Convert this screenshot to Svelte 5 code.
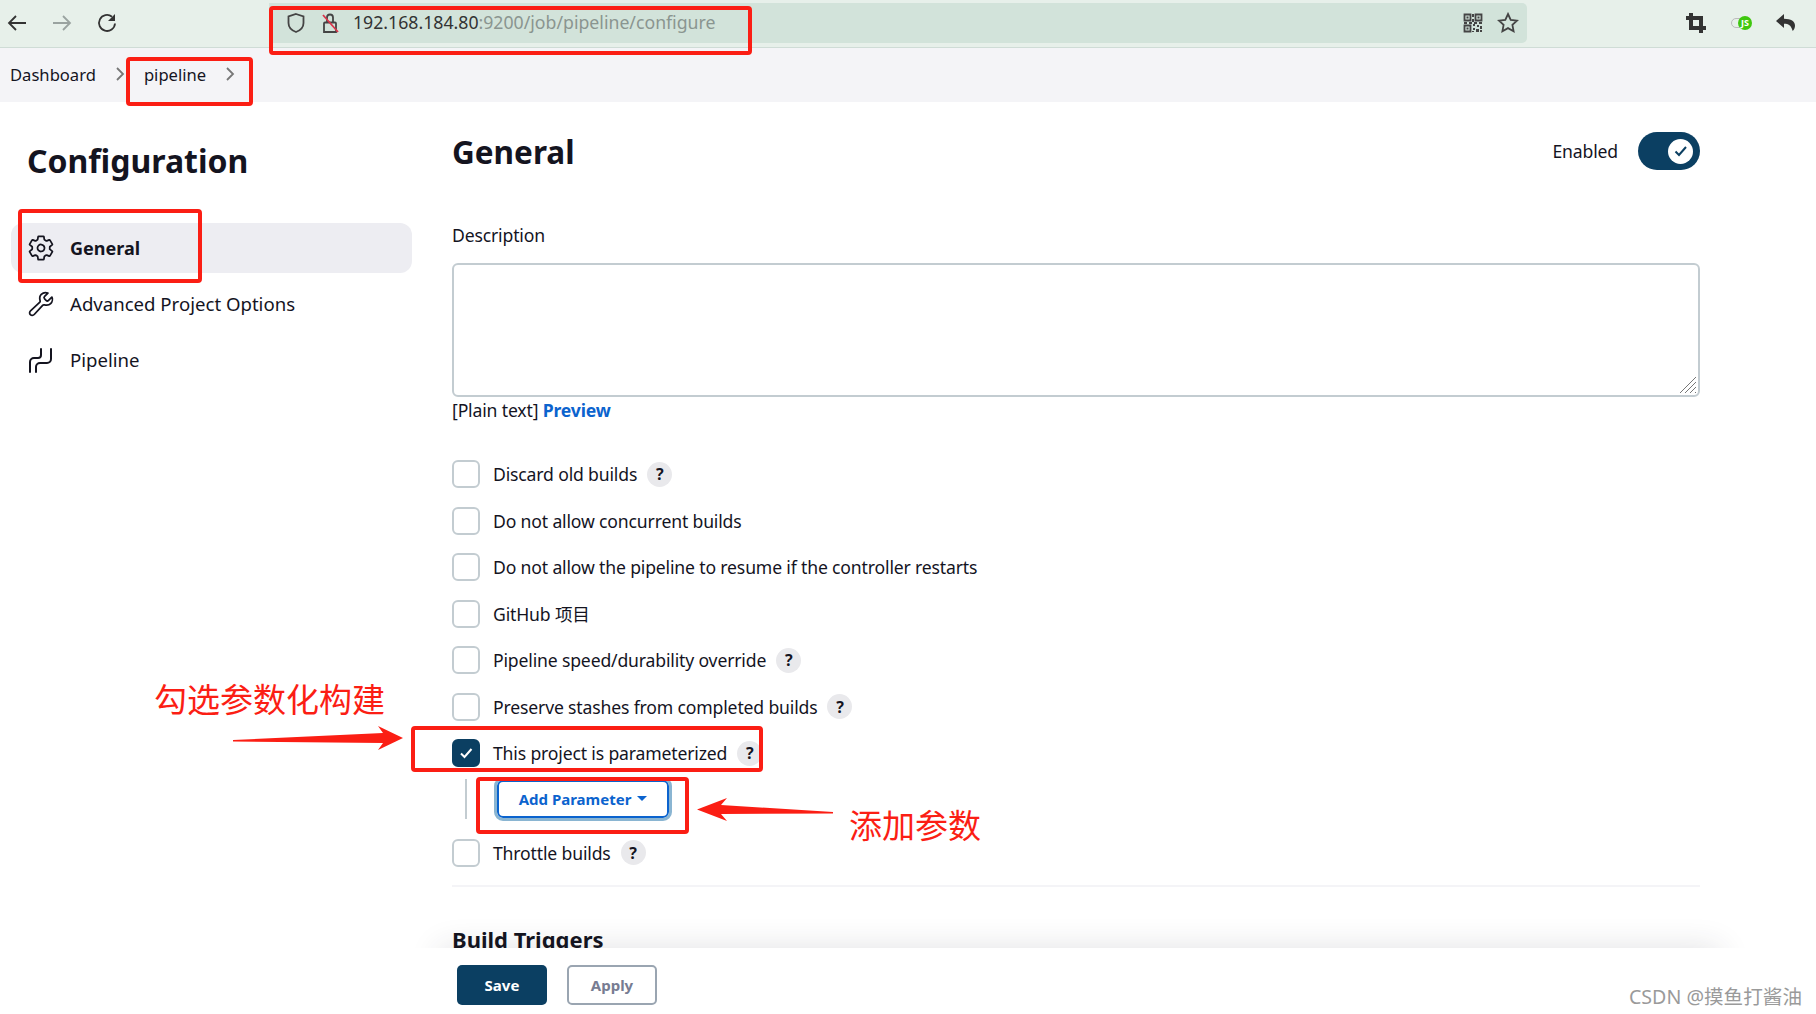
<script>
	const options = [
		{ label: 'Discard old builds', help: true },
		{ label: 'Do not allow concurrent builds' },
		{ label: 'Do not allow the pipeline to resume if the controller restarts' },
		{ label: 'GitHub 项目' },
		{ label: 'Pipeline speed/durability override', help: true },
		{ label: 'Preserve stashes from completed builds', help: true },
		{ label: 'This project is parameterized', help: true, checked: true, param: true },
		{ label: 'Throttle builds', help: true }
	]
</script>

<div class="page">
	<header class="browser">
		<div class="nav">
			<svg width="22" height="22" viewBox="0 0 22 22"><path d="M20 11H3M10 4l-7 7 7 7" /></svg>
			<svg class="off" width="22" height="22" viewBox="0 0 22 22"><path d="M2 11h17M12 4l7 7-7 7" /></svg>
			<svg width="22" height="22" viewBox="0 0 22 22">
				<path d="M19 11.500a8 8 0 1 1-3-6.800" />
				<path class="solid" d="M19 2v7h-7z" />
			</svg>
		</div>
		<div class="address">
			<svg width="20" height="22" viewBox="0 0 20 22"><path d="M10 2l7.500 2.500V11c0 4.500-3.500 7.500-7.500 9-4-1.500-7.500-4.500-7.500-9V4.500z" /></svg>
			<svg class="lock" width="20" height="22" viewBox="0 0 20 22">
				<path d="M5 10.500h10a1 1 0 0 1 1 1V20H4v-8.500a1 1 0 0 1 1-1zM7 10.500V5.500a3 3 0 0 1 6 0v5" />
				<path class="slash" d="M3 3l15 17" />
			</svg>
			<span class="url">192.168.184.80<span class="dim">:9200/job/pipeline/configure</span></span>
			<span class="grow"></span>
			<svg class="qr" width="20" height="20" viewBox="0 0 20 20">
				<path d="M1.500 1.500h6v6h-6zM12.500 1.500h6v6h-6zM1.500 12.500h6v6h-6z" />
				<path class="fill" d="M3.500 3.500h2v2h-2zM14.500 3.500h2v2h-2zM3.500 14.500h2v2h-2zM9 1h2v3H9zM9 6h2v3H9zM1 9h3v2H1zM6 9h3v2H6zM11 9h3v2h-3zM16 9h3v2h-3zM10 11h2v2h-2zM14 12h2v2h-2zM10 15h2v2h-2zM13 16h3v3h-3zM17 13h2v3h-2zM17 17h2v2h-2zM9 18h2v1H9z" />
			</svg>
			<svg width="22" height="22" viewBox="0 0 22 22"><path d="M11 2l2.700 5.800 6.300.8-4.600 4.300 1.200 6.300-5.600-3.100-5.600 3.100 1.200-6.300L2 8.600l6.300-.8z" /></svg>
		</div>
		<div class="tools">
			<svg width="20" height="20" viewBox="0 0 20 20"><path class="thick" d="M5 0v15h15M0 5h15v15" /></svg>
			<span class="js">
				<span class="js-track"></span>
				<span class="js-dot">JS</span>
			</span>
			<svg width="20" height="20" viewBox="0 0 20 20"><path class="solid" d="M8 1L0 8l8 7v-4.300c4.500 0 7 1.300 8.700 7.300 1.300-1 2.300-3 2.300-5.200 0-4.800-4-6.800-11-7z" /></svg>
		</div>
	</header>

	<nav class="crumbs">
		<span>Dashboard</span>
		<svg width="10" height="16" viewBox="0 0 10 16"><path d="M2 2l6 6-6 6" /></svg>
		<span class="crumb-job">pipeline</span>
		<svg width="10" height="16" viewBox="0 0 10 16"><path d="M2 2l6 6-6 6" /></svg>
	</nav>

	<div class="body">
		<aside class="side">
			<h1>Configuration</h1>
			<a class="item active">
				<svg width="28" height="28" viewBox="0 0 512 512"><path class="ion" d="M262.290 192.310a64 64 0 1057.400 57.400 64.130 64.130 0 00-57.400-57.400zM416.390 256a154.340 154.340 0 01-1.530 20.790l45.210 35.460a10.810 10.810 0 012.450 13.750l-42.770 74a10.810 10.810 0 01-13.140 4.590l-44.900-18.080a16.110 16.110 0 00-15.170 1.750A164.480 164.480 0 01325 400.800a15.940 15.940 0 00-8.820 12.140l-6.730 47.890a11.080 11.080 0 01-10.680 9.170h-85.540a11.110 11.110 0 01-10.690-8.870l-6.720-47.820a16.070 16.070 0 00-9-12.220 155.300 155.300 0 01-21.460-12.570 16 16 0 00-15.110-1.710l-44.890 18.070a10.810 10.810 0 01-13.140-4.580l-42.770-74a10.800 10.800 0 012.450-13.750l38.210-30a16.050 16.050 0 006-14.080c-.36-4.170-.58-8.330-.58-12.500s.21-8.270.58-12.350a16 16 0 00-6.070-13.940l-38.190-30A10.810 10.810 0 0149.480 186l42.770-74a10.810 10.810 0 0113.140-4.590l44.900 18.080a16.110 16.110 0 0015.170-1.750A164.480 164.480 0 01187 111.200a15.940 15.940 0 008.820-12.140l6.730-47.890A11.080 11.080 0 01213.230 42h85.540a11.110 11.110 0 0110.690 8.870l6.720 47.820a16.070 16.070 0 009 12.220 155.300 155.300 0 0121.460 12.570 16 16 0 0015.110 1.710l44.890-18.070a10.810 10.810 0 0113.140 4.580l42.770 74a10.800 10.800 0 01-2.450 13.750l-38.210 30a16.050 16.050 0 00-6.050 14.080c.33 4.140.55 8.300.55 12.470z" /></svg>
				<span>General</span>
			</a>
			<a class="item">
				<svg width="28" height="28" viewBox="0 0 512 512"><path class="ion" d="M393.870 190a32.100 32.100 0 01-45.250 0l-26.570-26.570a32.090 32.090 0 010-45.260L382.190 58a1 1 0 00-.3-1.640c-38.820-16.640-89.150-8.160-121.110 23.570-30.580 30.350-32.320 76-21.120 115.840a31.930 31.930 0 01-9.060 32.080L64 380a48.170 48.170 0 1068 68l153.860-167a31.930 31.930 0 0131.600-9.130c39.540 10.590 84.540 8.600 114.720-21.190 32.490-32 39.500-88.560 23.750-120.930a1 1 0 00-1.600-.26z" /></svg>
				<span>Advanced Project Options</span>
			</a>
			<a class="item">
				<svg width="28" height="28" viewBox="0 0 28 28"><path class="pipe" d="M3 27V17a4 4 0 0 1 4-4h4a3 3 0 0 0 3-3V4M9 27v-5a4 4 0 0 1 4-4h7a4 4 0 0 0 4-4V4" /></svg>
				<span>Pipeline</span>
			</a>
		</aside>

		<main class="main">
			<div class="head">
				<h2>General</h2>
				<span class="enabled">Enabled</span>
				<span class="toggle">
					<span class="knob">
						<svg width="16" height="16" viewBox="0 0 16 16"><path d="M2.500 8.500l3.500 3.500 7-8" /></svg>
					</span>
				</span>
			</div>

			<div class="desc-label">Description</div>
			<div class="textarea">
				<svg class="grip" width="18" height="18" viewBox="0 0 18 18"><path d="M1 17L17 1M6 17L17 6M11 17l6-6M16 17l1-1" /></svg>
			</div>
			<div class="plain">[Plain text] <a>Preview</a></div>

			<div class="options">
				{#each options as o}
					<div class="option">
						<span class="box" class:checked={o.checked}>
							{#if o.checked}
								<svg width="18" height="18" viewBox="0 0 18 18"><path d="M4 9.500l3.500 3.500 7-8" /></svg>
							{/if}
						</span>
						<span>{o.label}</span>
						{#if o.help}<span class="help">?</span>{/if}
					</div>
					{#if o.param}
						<div class="param">
							<button class="add">Add Parameter <i class="caret"></i></button>
						</div>
					{/if}
				{/each}
			</div>

			<hr />
			<h3>Build Triggers</h3>
		</main>
	</div>

	<footer class="bar">
		<div class="shade"></div>
		<button class="save">Save</button>
		<button class="apply">Apply</button>
	</footer>

	<div class="mark m-url"></div>
	<div class="mark m-job"></div>
	<div class="mark m-general"></div>
	<div class="mark m-param"></div>
	<div class="mark m-add"></div>
	<div class="note n-left">勾选参数化构建</div>
	<div class="note n-right">添加参数</div>
	<svg class="arrow a-left" width="170" height="24" viewBox="0 0 170 24"><path d="M0 14L150 7l-5-7 25 12-25 12 5-7L0 15.500z" /></svg>
	<svg class="arrow a-right" width="136" height="24" viewBox="0 0 136 24"><path d="M136 14L24 7l6-7L0 11.500 30 23l-6-7 112-.5z" /></svg>
	<div class="watermark">CSDN @摸鱼打酱油</div>
</div>

<style>
:global(body) {
	margin: 0;
	background: #fff;
}

.page {
	position: relative;
	display: flex;
	flex-direction: column;
	height: 1014px;
	overflow: hidden;
	font-family: "Noto Sans", "Noto Sans CJK SC", sans-serif;
	font-size: 17.600px;
	color: #14141f;
}

svg path {
	fill: none;
	stroke: currentColor;
	stroke-width: 1.8;
}

.browser {
	display: flex;
	align-items: center;
	padding-bottom: 2px;
	height: 45px;
	flex: none;
	background: #e7f0ea;
	border-bottom: 1px solid #cfdcd6;
	color: #333;
}

.nav {
	display: flex;
	gap: 23px;
	width: 270px;
	padding-left: 6px;
	box-sizing: border-box;
}

.nav .off {
	color: #9aa3a0;
}

.address {
	display: flex;
	align-items: center;
	width: 1258px;
	height: 40px;
	margin-left: -1px;
	background: #d2e3da;
	border-radius: 0 5px 5px 0;
	color: #444;
	box-sizing: border-box;
	padding: 0 8px 0 17px;
	gap: 14px;
}

.lock .slash {
	stroke: #d9344a;
}

.url {
	padding-bottom: 2px;
	margin-left: -1px;
	font-size: 17.700px;
	color: #333;
}

.dim {
	color: #8a9590;
}

.grow {
	flex: 1;
}

.qr .fill {
	fill: currentColor;
	stroke: none;
}

.tools {
	display: flex;
	align-items: center;
	margin-left: 159px;
	gap: 25px;
}

.thick {
	stroke-width: 4;
}

svg path.solid {
	fill: #333;
	stroke: none;
}

.js {
	position: relative;
	width: 20px;
	height: 14px;
}

.js-track {
	position: absolute;
	left: 0;
	top: 2px;
	width: 18px;
	height: 10px;
	border: 1px solid #bbb;
	border-radius: 6px;
	box-sizing: border-box;
}

.js-dot {
	position: absolute;
	left: 7px;
	top: 0;
	width: 14px;
	height: 14px;
	border-radius: 50%;
	background: #3fc70f;
	color: #fff;
	font-size: 9px;
	font-weight: 700;
	line-height: 14px;
	text-align: center;
}

.crumbs {
	display: flex;
	align-items: center;
	flex: none;
	height: 52px;
	padding: 0 0 2px 10px;
	background: #f4f4f7;
	font-size: 16.600px;
}

.crumbs svg {
	color: #777;
	margin-left: 19px;
}

.crumb-job {
	margin-left: 19px;
}

.crumbs svg:last-child {
	margin-left: 19px;
}

.body {
	display: flex;
	flex: 1;
	min-height: 0;
	overflow: hidden;
}

.side {
	width: 412px;
	flex: none;
	padding: 36px 0 0 11px;
	box-sizing: border-box;
}

h1 {
	margin: 0 0 39px 16px;
	font-size: 32px;
	line-height: 46px;
	font-weight: 700;
}

.item {
	display: flex;
	align-items: center;
	gap: 15px;
	height: 50px;
	padding-left: 16px;
	margin-bottom: 5.500px;
	border-radius: 12px;
	font-size: 18.600px;
}

.item.active {
	background: #ededf2;
	font-weight: 700;
	font-size: 18px;
}

path.ion {
	stroke-width: 32;
	stroke-linecap: round;
	stroke-linejoin: round;
}

path.pipe {
	stroke-width: 2;
	stroke-linecap: round;
}

.main {
	width: 1248px;
	margin-left: 40px;
	flex: none;
	position: relative;
	letter-spacing: -0.16px;
}

.head {
	display: flex;
	align-items: center;
	height: 40px;
	margin-top: 29px;
}

h2 {
	flex: 1;
	margin: 0;
	font-size: 31.500px;
	font-weight: 700;
	letter-spacing: 0;
}

.enabled {
	margin-right: 20px;
}

.toggle {
	display: flex;
	align-items: center;
	justify-content: flex-end;
	width: 62px;
	height: 38px;
	padding-right: 7px;
	box-sizing: border-box;
	border-radius: 19px;
	background: #0b3f62;
}

.knob {
	display: flex;
	align-items: center;
	justify-content: center;
	width: 25px;
	height: 25px;
	border-radius: 50%;
	background: #fff;
	color: #0b3f62;
}

.knob path {
	stroke-width: 2;
}

.desc-label {
	margin-top: 51px;
	line-height: 26px;
}

.textarea {
	position: relative;
	height: 134px;
	margin-top: 15px;
	box-sizing: border-box;
	border: 2px solid #c3ccd1;
	border-radius: 6px;
}

.grip {
	position: absolute;
	right: 1px;
	bottom: 1px;
	color: #777;
}

.grip path {
	stroke-width: 1;
}

.plain {
	line-height: 26px;
}

.plain a {
	color: #0b63ce;
	font-weight: 700;
}

.options {
	margin-top: 28px;
}

.option {
	display: flex;
	align-items: center;
	height: 46.500px;
	gap: 13px;
}

.box {
	display: flex;
	align-items: center;
	justify-content: center;
	width: 28px;
	height: 28px;
	box-sizing: border-box;
	border: 2px solid #c3ccd1;
	border-radius: 6px;
	background: #fff;
}

.box.checked {
	background: #0b3f62;
	border-color: #0b3f62;
	color: #fff;
}

.box.checked path {
	stroke-width: 2;
}

.help {
	display: flex;
	align-items: center;
	justify-content: center;
	width: 25px;
	height: 25px;
	margin-left: -3px;
	border-radius: 50%;
	background: #e9e9ec;
	font-size: 16px;
	font-weight: 700;
}

.param {
	display: flex;
	align-items: flex-start;
	height: 53px;
	margin-left: 13px;
	padding: 3px 0 0 32px;
	box-sizing: border-box;
	position: relative;
}

.param::before {
	content: "";
	position: absolute;
	left: 0;
	top: 2px;
	height: 40px;
	width: 2px;
	background: #c3ccd1;
}

button {
	font-family: inherit;
	font-weight: 700;
	font-size: 15px;
	box-sizing: border-box;
	cursor: pointer;
}

.add {
	display: flex;
	align-items: center;
	justify-content: center;
	gap: 6px;
	width: 172px;
	height: 38px;
	border: 2px solid #0b63ce;
	border-radius: 6px;
	outline: 3px solid #8ab5d2;
	background: #fff;
	color: #0b63ce;
}

.caret {
	width: 0;
	height: 0;
	border: 5px solid transparent;
	border-top-color: #0b63ce;
	border-bottom: 0;
}

hr {
	height: 2px;
	margin: 9px 0 0;
	border: 0;
	background: #f4f4f7;
}

h3 {
	position: relative;
	z-index: 1;
	margin: 37px 0 0;
	font-size: 22px;
	line-height: 30px;
	font-weight: 700;
	letter-spacing: 0;
}

.bar {
	position: relative;
	display: flex;
	align-items: center;
	flex: none;
	gap: 20px;
	height: 66px;
	padding: 8px 0 0 457px;
	box-sizing: border-box;
	background: #fff;
}

.shade {
	position: absolute;
	left: 440px;
	width: 1280px;
	top: 0;
	height: 66px;
	box-shadow: 0 0 32px rgba(40, 40, 60, 0.14);
	clip-path: inset(-50px -50px 66px -50px);
}

.save,
.apply {
	width: 90px;
	height: 40px;
	border-radius: 5px;
}

.save {
	border: 0;
	background: #0b3f62;
	color: #fff;
}

.apply {
	border: 2px solid #9aa5b1;
	background: #fff;
	color: #777c92;
}

.mark {
	position: absolute;
	box-sizing: border-box;
	border: 4px solid #fb1e14;
	border-radius: 4px;
}

.m-url { left: 269px; top: 6px; width: 483px; height: 49px; }
.m-job { left: 126px; top: 57px; width: 127px; height: 49px; }
.m-general { left: 18px; top: 209px; width: 184px; height: 74px; }
.m-param { left: 411px; top: 726px; width: 352px; height: 46px; }
.m-add { left: 476px; top: 777px; width: 213px; height: 57px; }

.note {
	position: absolute;
	color: #fb1e14;
	font-size: 33px;
	line-height: 44px;
	white-space: nowrap;
	font-family: "Noto Sans CJK SC", sans-serif;
}

.n-left { left: 154px; top: 676px; }
.n-right { left: 849px; top: 802px; }

.arrow {
	position: absolute;
}

.arrow path {
	fill: #fb1e14;
	stroke: none;
}

.a-left { left: 233px; top: 726px; }
.a-right { left: 697px; top: 798px; }

.watermark {
	position: absolute;
	right: 14px;
	top: 984px;
	color: #9a9a9a;
	font-size: 19.600px;
	line-height: 26px;
}
</style>
